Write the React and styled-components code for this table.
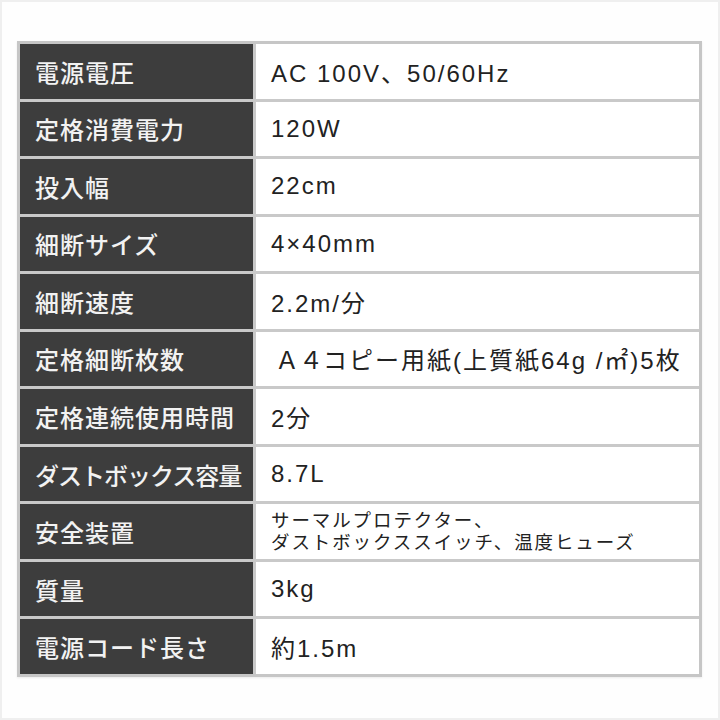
import styled, { createGlobalStyle } from 'styled-components'

const GlobalStyle = createGlobalStyle`
  html, body {
    margin: 0;
    padding: 0;
    background: #ffffff;
  }
  body {
    font-family: "Noto Sans CJK JP", "Noto Sans", sans-serif;
  }
`

const Page = styled.div`
  width: 720px;
  height: 720px;
  box-sizing: border-box;
  border: 2px solid #efefef;
  background: #fefefe;
  padding: 39px 16px 0 15px;
`

const Table = styled.div`
  width: 685px;
  height: 636px;
  box-sizing: border-box;
  border: 3px solid #c6c6c6;
  background: #c9c9c9;
  display: grid;
  grid-template-columns: 233px 1fr;
  grid-template-rows: repeat(11, 1fr);
  gap: 3px;
  box-shadow: 0 1px 2px rgba(0, 0, 0, 0.08);
`

const Label = styled.div`
  background: #3d3d3d;
  color: #f2f2f2;
  font-family: "Noto Sans CJK JP", sans-serif;
  font-size: 24px;
  font-weight: 500;
  letter-spacing: ${(p) => (p.$tight ? '-1px' : '1px')};
  display: flex;
  align-items: center;
  padding-left: 15px;
  white-space: nowrap;
`

const Value = styled.div`
  background: #ffffff;
  color: #222222;
  font-family: "Liberation Sans", "Noto Sans CJK JP", sans-serif;
  font-size: ${(p) => (p.$small ? '18.5px' : '24px')};
  line-height: ${(p) => (p.$small ? '22px' : 'normal')};
  letter-spacing: ${(p) => (p.$small ? '1.9px' : '2px')};
  display: flex;
  align-items: center;
  padding-left: ${(p) => (p.$indent ? '19px' : '15px')};
  white-space: pre-line;
`

const Narrow = styled.span`
  letter-spacing: 0;
`

const specs = [
  { label: '電源電圧', value: 'AC 100V、50/60Hz' },
  { label: '定格消費電力', value: '120W' },
  { label: '投入幅', value: '22cm' },
  { label: '細断サイズ', value: '4×40mm' },
  { label: '細断速度', value: '2.2m/分' },
  {
    label: '定格細断枚数',
    value: (
      <>
        <Narrow>Ａ４</Narrow>コピー用紙(上質紙64g /㎡)5枚
      </>
    ),
    indent: true,
  },
  { label: '定格連続使用時間', value: '2分' },
  { label: 'ダストボックス容量', value: '8.7L', tight: true },
  { label: '安全装置', value: 'サーマルプロテクター、\nダストボックススイッチ、温度ヒューズ', small: true },
  { label: '質量', value: '3kg' },
  { label: '電源コード長さ', value: '約1.5m' },
]

const App = () => {
  return (
    <>
      <GlobalStyle />
      <Page>
        <Table>
          {specs.map((row) => (
            <>
              <Label key={row.label} $tight={row.tight}>{row.label}</Label>
              <Value key={row.label + '-v'} $small={row.small} $indent={row.indent}>
                {row.value}
              </Value>
            </>
          ))}
        </Table>
      </Page>
    </>
  )
}

export default App
